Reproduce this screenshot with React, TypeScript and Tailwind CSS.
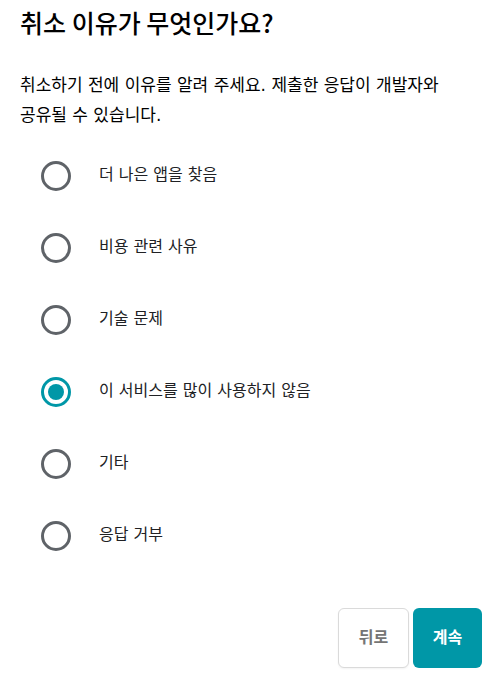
import { useState } from "react";

const reasons = [
  "더 나은 앱을 찾음",
  "비용 관련 사유",
  "기술 문제",
  "이 서비스를 많이 사용하지 않음",
  "기타",
  "응답 거부",
];

export default function App() {
  const [selected, setSelected] = useState(3);

  return (
    <form
      className="min-h-screen bg-white pt-0.5 pb-3 font-['DejaVu_Sans','Noto_Sans_CJK_KR',sans-serif] break-keep text-[#202124]"
      onSubmit={(event) => event.preventDefault()}
    >
      <h1
        id="reason-title"
        className="px-5 font-['Noto_Sans_CJK_KR',sans-serif] text-[25px] leading-10 font-medium text-black"
      >
        취소 이유가 무엇인가요?
      </h1>
      <p className="mt-7 pr-10 pl-5 text-[17px] leading-[30px] text-black">
        취소하기 전에 이유를 알려 주세요. 제출한 응답이 개발자와 공유될 수 있습니다.
      </p>
      <div role="radiogroup" aria-labelledby="reason-title" className="mt-2.5">
        {reasons.map((reason, index) => (
          <label key={reason} className="flex h-18 cursor-pointer items-center pl-[41px] text-base">
            <input
              type="radio"
              name="reason"
              checked={selected === index}
              onChange={() => setSelected(index)}
              className="mr-7 grid size-[30px] shrink-0 appearance-none place-items-center rounded-full border-3 border-[#5f6368] before:size-4 before:rounded-full checked:border-[#0097a7] checked:before:bg-[#0097a7]"
            />
            <span className="pb-0.5">{reason}</span>
          </label>
        ))}
      </div>
      <div className="mt-9 flex justify-end gap-1 pr-[5px]">
        <button
          type="button"
          className="h-15 w-[71px] rounded-md border border-[#dadada] bg-white text-base font-bold text-[#757575] shadow-xs"
        >
          뒤로
        </button>
        <button type="submit" className="h-15 w-[69px] rounded-md bg-[#0097a7] text-base font-bold text-white">
          계속
        </button>
      </div>
    </form>
  );
}
